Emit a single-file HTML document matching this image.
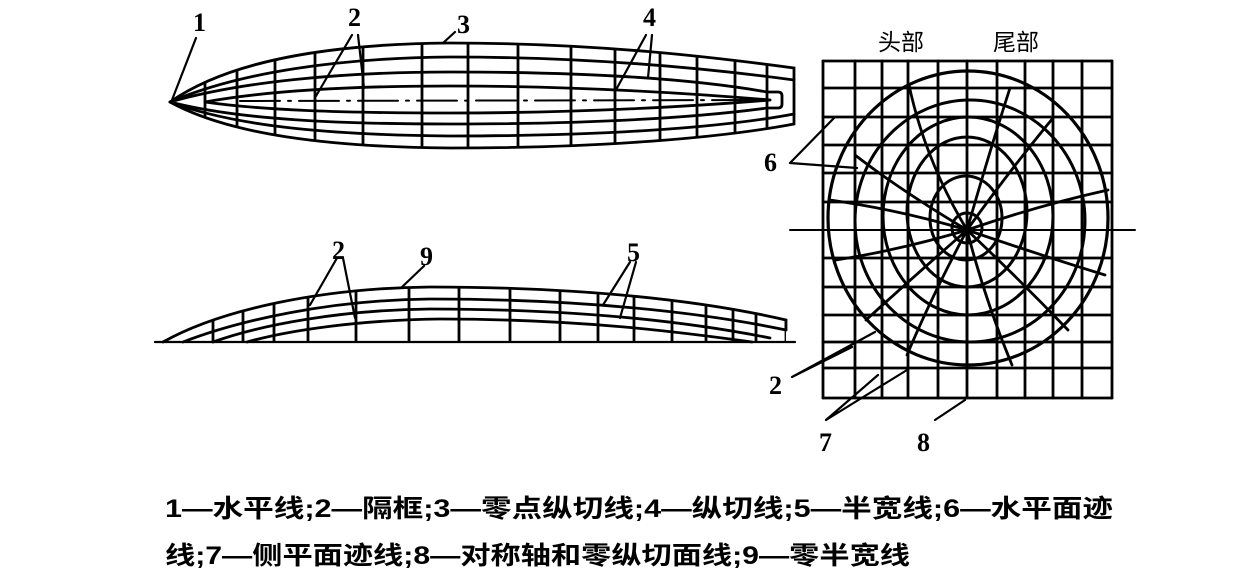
<!DOCTYPE html>
<html><head><meta charset="utf-8"><style>
html,body{margin:0;padding:0;background:#fff;}
svg{display:block}
</style></head><body>
<svg width="1249" height="582" viewBox="0 0 1249 582" xmlns="http://www.w3.org/2000/svg">
<defs>
<clipPath id="hull"><path d="M170,102 C230,60 330,44 450,43 C600,43 720,58 794,68 L794,124 C720,138 600,148 450,148 C330,147 230,135 170,102Z"/></clipPath>
<clipPath id="side"><path d="M163,342 C220,310 320,288 430,287 C580,287 700,300 786,320 L786,342Z"/></clipPath>
</defs>
<g fill="none" stroke="#000" stroke-width="2.8" stroke-linecap="round">
<path d="M170,102 C230,60 330,44 450,43 C600,43 720,58 794,68 L794,124 C720,138 600,148 450,148 C330,147 230,135 170,102"/>
<path d="M170,102 C240,72 340,58 450,57 C600,57 720,70 794,80"/>
<path d="M170,102 C240,82 340,72 450,72 C600,72 700,80 767,92"/>
<path d="M205,102 C260,92 340,86 450,86 C580,86 700,94 770,100"/>
<path d="M205,102 C260,110 340,113 450,113 C580,113 700,106 770,100"/>
<path d="M170,102 C240,120 340,124 450,124 C600,124 700,117 767,108"/>
<path d="M170,102 C240,128 340,135 450,136 C600,136 720,128 794,114"/>
<path d="M240,101 L770,100" stroke-width="2" stroke-dasharray="40 8 3 8"/>
<path d="M767,92 L778,92 Q782,92 782,96 L782,104 Q782,108 778,108 L767,108"/>
<g clip-path="url(#hull)">
<path d="M205,30V160M237,30V160M275,30V160M315,30V160M363,30V160M422,30V160M468,30V160M518,30V160M571,30V160M615,30V160M660,30V160M697,30V160M735,30V160M767,30V160"/>
</g>
<path d="M163,342 C220,310 320,288 430,287 C580,287 700,300 786,320 L786,330"/>
<path d="M183,342 C240,320 330,300 430,299 C580,299 700,312 786,330"/>
<path d="M213,342 C260,325 340,310 430,309 C580,309 690,322 770,338"/>
<path d="M247,342 C290,330 360,320 440,319 C580,319 680,332 752,342"/>
<path d="M155,342 L795,342" stroke-width="2.2"/>
<g clip-path="url(#side)">
<path d="M213,280V342M243,280V342M274,280V342M308,280V342M356,280V342M409,280V342M459,280V342M510,280V342M560,280V342M598,280V342M634,280V342M672,280V342M706,280V342M733,280V342M756,280V342M786,280V342"/>
</g>
<path d="M823,61V398M855,61V398M882,61V398M908,61V398M938,61V398M967,61V398M997,61V398M1025,61V398M1053,61V398M1082,61V398M1112,61V398"/>
<path d="M823,61H1112M823,88H1112M823,117H1112M823,145H1112M823,173H1112M823,202H1112M823,258H1112M823,287H1112M823,315H1112M823,342H1112M823,368H1112M823,398H1112"/>
<path d="M790,230H1135" stroke-width="2"/>
<ellipse cx="968" cy="218" rx="140" ry="147" stroke-width="3.2"/>
<ellipse cx="970" cy="221" rx="115" ry="121" stroke-width="3"/>
<ellipse cx="968" cy="216" rx="85" ry="99" stroke-width="3"/>
<ellipse cx="967" cy="212" rx="60" ry="75" stroke-width="3"/>
<ellipse cx="966" cy="218" rx="36" ry="42" stroke-width="3"/>
<ellipse cx="967" cy="228" rx="15" ry="15" stroke-width="3"/>
<path stroke-width="2.8" d="M967,230 Q925,160 909,85 M967,230 Q990,150 1010,88 M967,230 Q1010,170 1053,118 M967,230 Q1040,205 1108,190 M967,230 Q1040,255 1105,275 M967,230 Q1020,280 1068,330 M967,230 Q985,300 1012,365 M967,230 L967,365 M967,230 Q930,300 907,355 M967,230 Q910,280 866,320 M967,230 Q900,250 836,260 M967,230 Q900,210 830,200 M967,230 Q900,190 855,155"/>
<path stroke-width="2.2" d="M196,38L172,100 M352,35L316,96 M358,35L364,88 M455,32L443,43 M646,35L617,88 M652,35L648,78 M337,258L310,305 M343,258L355,318 M424,266L402,287 M630,262L603,305 M636,262L620,318 M790,163L835,117 M790,163L857,168 M792,377L875,332 M792,377L852,347 M826,420L878,375 M826,420L907,370 M935,420L965,400"/>
</g>
<g font-family="'Liberation Serif','Noto Serif CJK SC',serif" font-size="26" font-weight="bold" fill="#000">
<text x="193" y="31">1</text>
<text x="348" y="26">2</text>
<text x="457" y="33">3</text>
<text x="643" y="26">4</text>
<text x="332" y="259">2</text>
<text x="420" y="265">9</text>
<text x="627" y="261">5</text>
<text x="764" y="171">6</text>
<text x="769" y="394">2</text>
<text x="819" y="451">7</text>
<text x="917" y="451">8</text>
</g>
<g font-family="'Liberation Sans','Noto Sans CJK SC',sans-serif" font-size="23" fill="#000">
<text x="878" y="50">头部</text>
<text x="993" y="50">尾部</text>
</g>
<g font-family="'Liberation Sans','Noto Sans CJK SC',sans-serif" font-size="25" font-weight="bold" fill="#000">
<text x="165" y="517" textLength="948" lengthAdjust="spacingAndGlyphs">1—水平线;2—隔框;3—零点纵切线;4—纵切线;5—半宽线;6—水平面迹</text>
<text x="165" y="564" textLength="745" lengthAdjust="spacingAndGlyphs">线;7—侧平面迹线;8—对称轴和零纵切面线;9—零半宽线</text>
</g>
</svg>
</body></html>
